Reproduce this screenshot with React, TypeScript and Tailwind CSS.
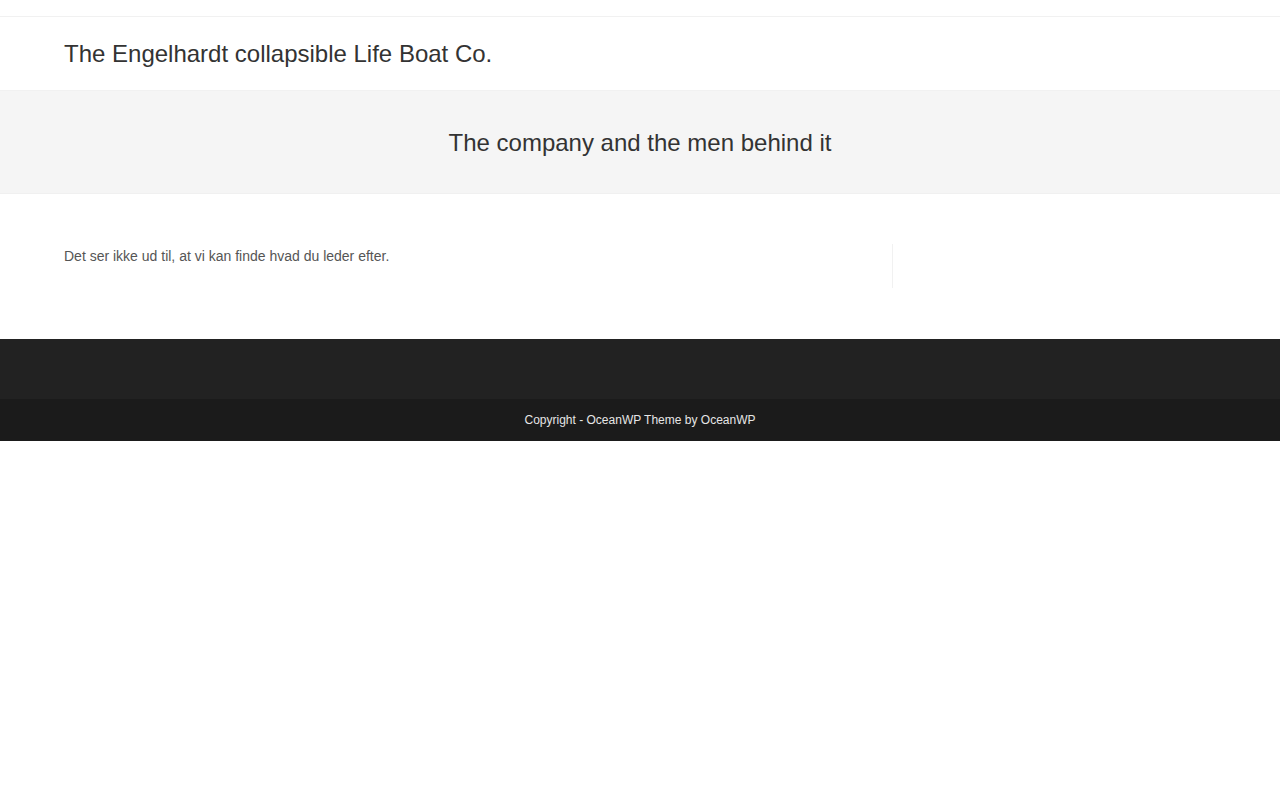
export default function App() {
  return (
    <div className="min-h-[800px] bg-white font-['Liberation_Sans',Arial,sans-serif] text-[14px] text-[#555]">
      {/* top bar */}
      <div className="h-[17px] border-b border-[#f1f1f1]" />

      {/* header */}
      <header className="h-[74px] border-b border-[#f1f1f1]">
        <div className="mx-auto flex h-full w-[90%] max-w-[1200px] items-center">
          <a className="text-[24px] leading-none text-[#333]" href="#">
            The Engelhardt collapsible Life Boat Co.
          </a>
        </div>
      </header>

      {/* page title */}
      <section className="border-b border-[#f0f0f0] bg-[#f5f5f5] pt-[35px] pb-[33px]">
        <h1 className="text-center text-[24px] leading-[1.4] text-[#333]">
          The company and the men behind it
        </h1>
      </section>

      {/* content */}
      <main className="mx-auto flex w-[90%] max-w-[1200px] pt-[50px] pb-[51px]">
        <div className="w-[71.9%] pr-[30px]">
          <p className="mb-[19px] leading-[1.8]">Det ser ikke ud til, at vi kan finde hvad du leder efter.</p>
        </div>
        <aside className="flex-1 border-l border-[#f1f1f1]" />
      </main>

      {/* footer */}
      <footer>
        <div className="h-[60px] bg-[#222]" />
        <div className="flex h-[42px] items-center justify-center bg-[#1b1b1b] text-[12px] text-[#e6e6e6]">
          Copyright - OceanWP Theme by OceanWP
        </div>
      </footer>
    </div>
  );
}
